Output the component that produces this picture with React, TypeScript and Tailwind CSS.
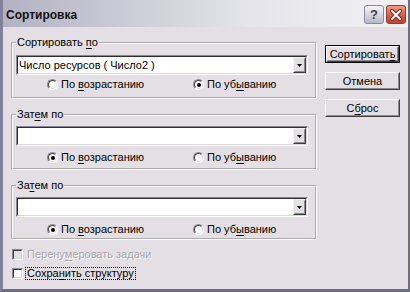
import type { ReactNode } from "react";

function U({ children }: { children: ReactNode }) {
  return <span className="underline decoration-1 underline-offset-[2px]">{children}</span>;
}

function Radio({ checked = false }: { checked?: boolean }) {
  return (
    <span className="relative flex h-[11px] w-[11px] shrink-0 items-center justify-center rounded-full border border-b-white border-l-[#8a8792] border-r-white border-t-[#8a8792] bg-white">
      <span className="absolute inset-0 rounded-full border border-b-[#e4e0e4] border-l-[#3c3c3c] border-r-[#e4e0e4] border-t-[#3c3c3c]" />
      {checked ? <span className="h-[4px] w-[4px] rounded-full bg-black" /> : null}
    </span>
  );
}

function Check({ disabled = false }: { disabled?: boolean }) {
  return (
    <span className="flex h-[11px] w-[11px] shrink-0 border border-b-white border-l-[#8a8792] border-r-white border-t-[#8a8792]">
      <span
        className={
          disabled
            ? "flex-1 border border-b-[#dcd8dc] border-l-[#3c3c3c] border-r-[#dcd8dc] border-t-[#3c3c3c] bg-[#e4dfe4]"
            : "flex-1 border border-b-[#dcd8dc] border-l-[#3c3c3c] border-r-[#dcd8dc] border-t-[#3c3c3c] bg-white"
        }
      />
    </span>
  );
}

function Combo({ value = "" }: { value?: string }) {
  return (
    <div className="flex h-[20px] w-[292px] border border-b-white border-l-[#8a8792] border-r-white border-t-[#8a8792]">
      <div className="flex flex-1 items-stretch border border-b-[#dcd8dc] border-l-[#2e2e2e] border-r-[#dcd8dc] border-t-[#2e2e2e] bg-white">
        <span className="flex flex-1 items-center pl-[1px] leading-[13px]">{value}</span>
        <span className="flex w-[13px] border border-b-[#3c3c3c] border-l-[#f4f2f4] border-r-[#3c3c3c] border-t-[#f4f2f4] bg-[#e4dfe4]">
          <span className="flex flex-1 items-center justify-center border border-transparent border-b-[#8d8a94] border-r-[#8d8a94]">
            <svg width="5" height="3" viewBox="0 0 5 3">
              <path d="M0 0h5L2.5 3z" fill="#000" />
            </svg>
          </span>
        </span>
      </div>
    </div>
  );
}

function Group({
  label,
  value,
  asc,
  pt,
  gap,
  pb,
}: {
  label: ReactNode;
  value?: string;
  asc: boolean;
  pt: string;
  gap: string;
  pb: string;
}) {
  return (
    <fieldset className={`w-[306px] border-2 border-white [border-style:groove] pl-[3px] ${pt} ${pb}`}>
      <legend className="px-[1px] leading-[13px]">{label}</legend>
      <Combo value={value} />
      <div className={`flex h-[13px] items-center pl-[31px] ${gap}`}>
        <div className="flex w-[146px] items-center gap-[3px]">
          <Radio checked={asc} />
          <span className="leading-[13px]">
            По <U>в</U>озрастанию
          </span>
        </div>
        <div className="flex items-center gap-[3px]">
          <Radio checked={!asc} />
          <span className="leading-[13px]">
            По уб<U>ы</U>ванию
          </span>
        </div>
      </div>
    </fieldset>
  );
}

function Btn({ children, def = false }: { children: ReactNode; def?: boolean }) {
  const face = (
    <div className="flex flex-1 border border-b-[#404040] border-l-white border-r-[#404040] border-t-white">
      <div className="flex flex-1 items-center justify-center border border-transparent border-b-[#8d8a94] border-r-[#8d8a94] leading-[13px]">
        {children}
      </div>
    </div>
  );
  return (
    <div className={def ? "flex h-[18px] w-[75px] border border-black" : "flex h-[18px] w-[75px]"}>
      {face}
    </div>
  );
}

export default function App() {
  return (
    <div className="flex h-[292px] w-[410px] flex-col overflow-hidden border-b-[3px] border-l-[3px] border-r-2 border-b-[#6e6c80] border-l-[#84829a] border-r-[#6e6c80] bg-[#e4dfe4] font-['Liberation_Sans',Arial,sans-serif] text-[11px] text-black">
      <div className="flex h-[27px] shrink-0 items-center bg-gradient-to-r from-[#b3b2c3] via-[#e4e4ea] via-60% to-[#f2f2f5] pl-[3px] pr-[2px] pt-[2px]">
        <span className="flex-1 text-[12px] font-bold text-[#111]">Сортировка</span>
        <div className="flex gap-[2px]">
          <span className="flex h-[19px] w-[20px] items-center justify-center rounded-[3px] border border-[#8b8a9b] bg-gradient-to-b from-[#f6f6f8] to-[#b9b8c8] text-[13px] font-bold leading-none text-[#3e3e50]">
            ?
          </span>
          <span className="flex h-[19px] w-[20px] items-center justify-center rounded-[3px] border border-[#9a3a2a] bg-gradient-to-b from-[#f29a82] via-[#dc6048] to-[#c6402c]">
            <svg width="12" height="12" viewBox="0 0 12 12">
              <path d="M2 2l8 8M10 2l-8 8" stroke="#7a2418" strokeWidth="4" strokeLinecap="square" />
              <path d="M2 2l8 8M10 2l-8 8" stroke="#fff" strokeWidth="2" strokeLinecap="square" />
            </svg>
          </span>
        </div>
      </div>
      <div className="flex flex-1">
        <div className="flex flex-col pl-[8px] pt-[9px]">
          <Group
            label={
              <>
                Сортировать <U>п</U>о
              </>
            }
            value="Число ресурсов ( Число2 )"
            asc={false}
            pt="pt-[6px]"
            gap="mt-[3px]"
            pb="pb-[6px]"
          />
          <div className="mt-[9px]">
            <Group
              label={
                <>
                  Зат<U>е</U>м по
                </>
              }
              asc
              pt="pt-[5px]"
              gap="mt-[5px]"
              pb="pb-[4px]"
            />
          </div>
          <div className="mt-[9px]">
            <Group
              label={
                <>
                  За<U>т</U>ем по
                </>
              }
              asc
              pt="pt-[5px]"
              gap="mt-[6px]"
              pb="pb-[2px]"
            />
          </div>
          <div className="mt-[8px] flex h-[13px] items-center gap-[2px] pl-[1px]">
            <Check disabled />
            <span className="px-[2px] leading-[13px] text-[#a8a4ab] [text-shadow:1px_1px_0_#fff]">
              Перену<U>м</U>еровать задачи
            </span>
          </div>
          <div className="mt-[6px] flex h-[13px] items-center gap-[2px] pl-[1px]">
            <Check />
            <span className="border border-dotted border-black px-[1px] leading-[11px]">
              Сохра<U>н</U>ить структуру
            </span>
          </div>
        </div>
        <div className="ml-[8px] mt-[18px] flex flex-col gap-[9px]">
          <Btn def>
            Сортироват<U>ь</U>
          </Btn>
          <Btn>Отмена</Btn>
          <Btn>
            С<U>б</U>рос
          </Btn>
        </div>
      </div>
    </div>
  );
}
